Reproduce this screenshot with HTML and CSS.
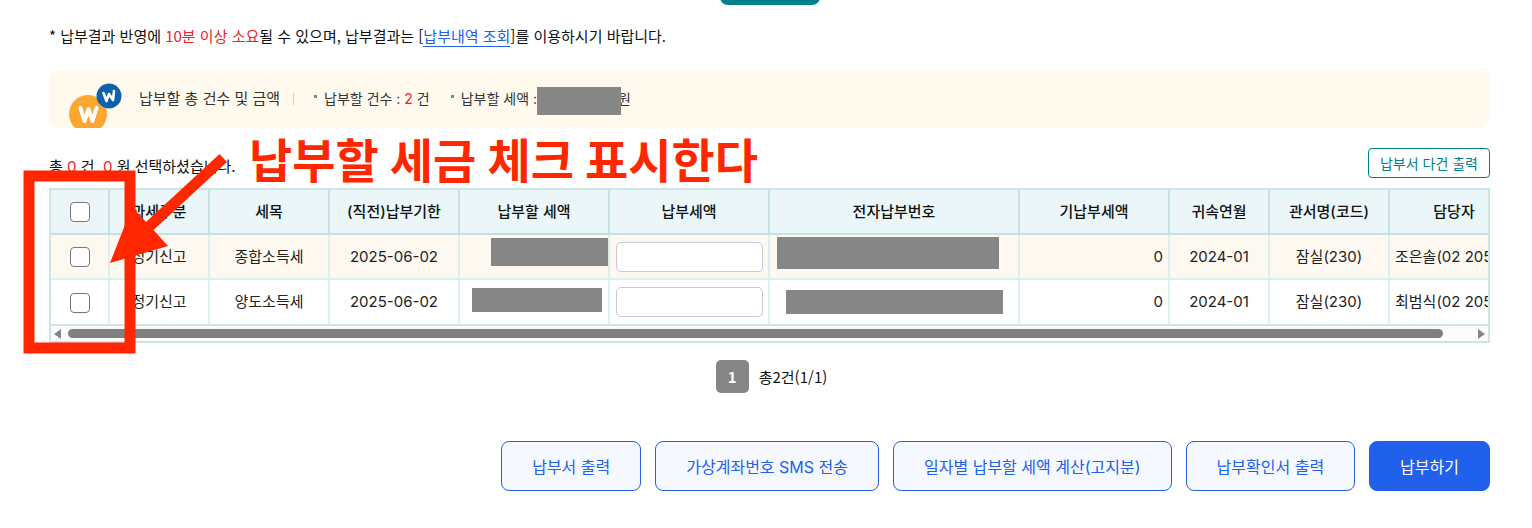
FILE: index.html
```
<!DOCTYPE html>
<html lang="ko">
<head>
  <meta charset="UTF-8">
  <title>납부할 세액 조회납부</title>
  <link rel="stylesheet" href="styles.css">
</head>
<body>
<div class="page">
  <div class="search">
    <button type="button" class="btn_search" aria-label="조회하기"></button>
  </div>

  <p class="notice">* 납부결과 반영에 <em>10분 이상 소요</em>될 수 있으며, 납부결과는 [<a href="#">납부내역 조회</a>]를 이용하시기 바랍니다.</p>

  <div class="summary">
    <svg class="coin" width="54" height="46" viewBox="0 0 54 46">
      <circle cx="19" cy="31" r="19" fill="#fba732"/>
      <path d="M11.500 25l4 13 4-12 4 12 4-13" fill="none" stroke="#fff" stroke-width="4" stroke-linecap="round" stroke-linejoin="round"/>
      <circle cx="40" cy="13" r="12.500" fill="#0c62ab"/>
      <path d="M34.500 10l3 8 2.500-7 4 6 1-9" fill="none" stroke="#fff" stroke-width="2.600" stroke-linecap="round" stroke-linejoin="round"/>
    </svg>
    <strong>납부할 총 건수 및 금액</strong>
    <ul>
      <li>납부할 건수 : <em>2</em> 건</li>
      <li>납부할 세액 : <span class="amount"></span>원</li>
    </ul>
  </div>

  <div class="list_top">
    <p>총 <em>0</em> 건&nbsp; <em>0</em> 원 선택하셨습니다.</p>
    <button type="button" class="btn_multi">납부서 다건 출력</button>
  </div>

  <div class="grid">
    <div class="grid_view">
      <table>
        <colgroup>
          <col class="w59"><col class="w100"><col class="w120"><col class="w130"><col class="w150"><col class="w160">
          <col class="w250"><col class="w150"><col class="w100"><col class="w120"><col class="w130">
        </colgroup>
        <thead>
          <tr>
            <th><input type="checkbox" aria-label="전체 선택"></th>
            <th>과세구분</th>
            <th>세목</th>
            <th>(직전)납부기한</th>
            <th>납부할 세액</th>
            <th>납부세액</th>
            <th>전자납부번호</th>
            <th>기납부세액</th>
            <th>귀속연월</th>
            <th>관서명(코드)</th>
            <th>담당자</th>
          </tr>
        </thead>
        <tbody>
          <tr class="on">
            <td><input type="checkbox" aria-label="종합소득세 선택"></td>
            <td>정기신고</td>
            <td>종합소득세</td>
            <td>2025-06-02</td>
            <td></td>
            <td><input type="text" aria-label="종합소득세 납부세액"></td>
            <td></td>
            <td class="num">0</td>
            <td>2024-01</td>
            <td>잠실(230)</td>
            <td class="left">조은솔(02 205</td>
          </tr>
          <tr>
            <td><input type="checkbox" aria-label="양도소득세 선택"></td>
            <td>정기신고</td>
            <td>양도소득세</td>
            <td>2025-06-02</td>
            <td></td>
            <td><input type="text" aria-label="양도소득세 납부세액"></td>
            <td></td>
            <td class="num">0</td>
            <td>2024-01</td>
            <td>잠실(230)</td>
            <td class="left">최범식(02 205</td>
          </tr>
        </tbody>
      </table>
    </div>
    <div class="scroll">
      <span class="arrow prev"></span>
      <span class="track"><span class="thumb"></span></span>
      <span class="arrow next"></span>
    </div>
  </div>

  <div class="paging">
    <button type="button">1</button>
    <span>총2건(1/1)</span>
  </div>

  <div class="btns">
    <button type="button">납부서 출력</button>
    <button type="button">가상계좌번호 SMS 전송</button>
    <button type="button">일자별 납부할 세액 계산(고지분)</button>
    <button type="button">납부확인서 출력</button>
    <button type="button" class="pay">납부하기</button>
  </div>

  <!-- 설명 표시 -->
  <svg class="mark" width="1020" height="360" viewBox="0 0 1020 360">
    <g fill="#868686">
      <rect x="537" y="87" width="84" height="28"/>
      <rect x="491" y="238" width="117" height="28"/>
      <rect x="472" y="288" width="130" height="24"/>
      <rect x="777" y="237" width="222" height="32"/>
      <rect x="786" y="290" width="217" height="24"/>
    </g>
    <rect x="29" y="176" width="101" height="172" fill="none" stroke="#ff2600" stroke-width="11"/>
    <path d="M110 263L132 207 146 222 219.500 154 227 162 153.500 230 168 246z" fill="#ff2600"/>
  </svg>
  <p class="mark_text">납부할 세금 체크 표시한다</p>
</div>
</body>
</html>
```
FILE: styles.css
```
* {
  margin: 0;
  padding: 0;
  box-sizing: border-box;
}

body {
  font: 15px/24px "Noto Sans CJK KR", sans-serif;
  color: #111;
  background: #fff;
}

ul {
  list-style: none;
}

em {
  font-style: normal;
  color: #ec2227;
}

button,
input {
  font-family: inherit;
}

button {
  cursor: pointer;
}

.page {
  position: relative;
  padding: 0 42px 37px 49px;
  overflow: hidden;
}

.summary,
.list_top,
.grid,
.btns,
.mark_text {
  font-family: Inter, "Noto Sans CJK KR", sans-serif;
}

.search {
  height: 5px;
  display: flex;
  justify-content: center;
  align-items: flex-end;
}

.btn_search {
  flex: none;
  width: 100px;
  height: 40px;
  border: 0;
  border-radius: 8px;
  background: #00808a;
}

.notice {
  margin-top: 19px;
}

.notice a {
  color: #2160eb;
  text-decoration: none;
  border-bottom: 1px solid #2160eb;
}

/* 납부할 총 건수 */
.summary {
  display: flex;
  align-items: center;
  height: 59px;
  margin-top: 21px;
  padding-left: 20px;
  border-radius: 10px;
  background: #fff9ee;
  color: #333;
  overflow: hidden;
}

.coin {
  flex: none;
  align-self: flex-end;
  margin-bottom: -1px;
}

.summary strong {
  margin-left: 16px;
  padding-right: 13px;
  font-weight: normal;
  line-height: 12px;
  border-right: 1px solid #ccc;
}

.summary ul {
  display: flex;
  gap: 21px;
  margin-left: 20px;
  font-size: 14px;
}

.summary li {
  display: flex;
  align-items: center;
  white-space: pre;
}

.summary li::before {
  content: "";
  width: 3px;
  height: 3px;
  margin: 0 7px 4px 0;
  background: #888;
}

.amount {
  width: 77px;
}

.list_top {
  display: flex;
  justify-content: space-between;
  height: 40px;
  margin-top: 20px;
}

.list_top p {
  margin-top: 7px;
}

.btn_multi {
  height: 30px;
  padding: 0 11px;
  border: 1px solid #00808a;
  border-radius: 4px;
  background: #fff;
  color: #00808a;
  font-size: 14px;
}

/* 목록 */
.grid {
  border: 2px solid #cde4e6;
}

.grid_view {
  overflow: hidden;
}

table {
  width: 1469px;
  table-layout: fixed;
  border-collapse: separate;
  border-spacing: 0;
}

.w59 { width: 59px; }
.w100 { width: 100px; }
.w120 { width: 120px; }
.w130 { width: 130px; }
.w150 { width: 150px; }
.w160 { width: 160px; }
.w250 { width: 250px; }

th,
td {
  height: 45px;
  border-right: 2px solid #dceeee;
  border-bottom: 2px solid #dceeee;
  text-align: center;
  white-space: nowrap;
}

th {
  background: #eaf6f7;
  border-color: #c6e0e2;
  font-weight: 500;
}

td {
  color: #222;
}

tr.on td {
  background: #fdf9f1;
}

tbody tr:last-child td {
  height: 46px;
  border-bottom-color: #cde4e6;
}

td.num {
  padding-right: 5px;
  text-align: right;
}

td.left {
  padding-left: 5px;
  text-align: left;
}

input[type=checkbox] {
  appearance: none;
  width: 20px;
  height: 20px;
  border: 1px solid #767676;
  border-radius: 4px;
  background: #fff;
  vertical-align: middle;
}

input[type=text] {
  width: 147px;
  height: 30px;
  padding: 0 8px;
  border: 1px solid #c6c9d8;
  border-radius: 5px;
  background: #fff;
  font-size: 15px;
  vertical-align: middle;
}

.scroll {
  display: flex;
  align-items: center;
  height: 15px;
  padding: 0 3px;
  background: #fcfcfc;
}

.arrow {
  border: 5px solid transparent;
}

.prev {
  border-right: 7px solid #858585;
  border-left: 0;
}

.next {
  border-left: 7px solid #858585;
  border-right: 0;
}

.track {
  flex: 1;
  margin: 0 7px;
}

.thumb {
  display: block;
  width: 98%;
  height: 9px;
  border-radius: 5px;
  background: #808080;
}

.paging {
  display: flex;
  justify-content: center;
  align-items: center;
  gap: 10px;
  margin-top: 17px;
  padding-left: 4px;
}

.paging button {
  width: 33px;
  height: 33px;
  border: 0;
  border-radius: 5px;
  background: #858585;
  color: #fff;
  font-size: 15px;
  font-weight: bold;
}

.btns {
  display: flex;
  justify-content: flex-end;
  gap: 14px;
  margin-top: 48px;
}

.btns button {
  height: 50px;
  padding: 0 30px;
  border: 1px solid #2160eb;
  border-radius: 8px;
  background: #f5f8ff;
  color: #2160eb;
  font-size: 16px;
}

.btns .pay {
  background: #2160eb;
  color: #fff;
}

.mark {
  position: absolute;
  top: 0;
  left: 0;
  pointer-events: none;
}

.mark_text {
  position: absolute;
  top: 131px;
  left: 249px;
  color: #ff2600;
  font-size: 47px;
  font-weight: bold;
  line-height: 60px;
  white-space: nowrap;
}
```
